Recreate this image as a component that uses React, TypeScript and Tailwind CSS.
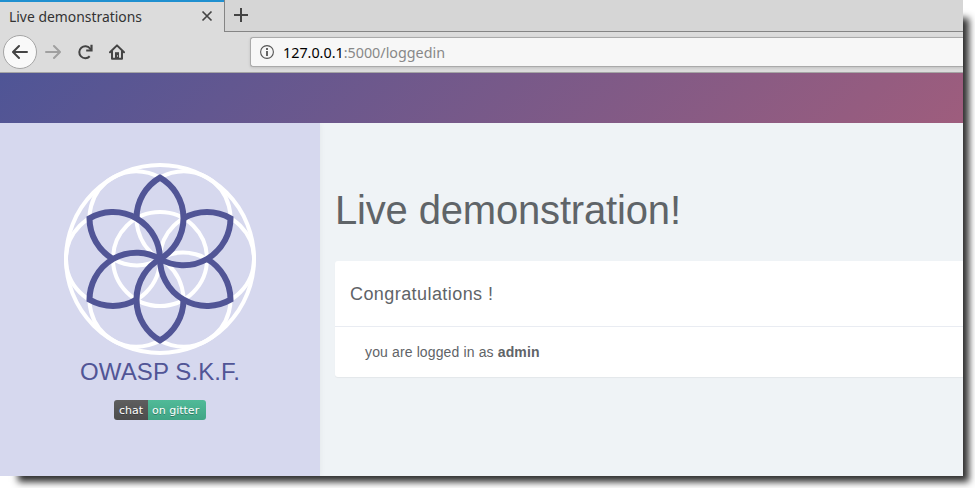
const R = 47;
const H = R * Math.sin(Math.PI / 3);
const angles = [0, 60, 120, 180, 240, 300];

function FlowerLogo() {
  return (
    <svg className="block h-[196px] w-[196px]" viewBox="-98 -98 196 196" fill="none">
      <g stroke="#fff" strokeWidth="4">
        <circle r={R * 2} />
        <circle r={R} />
        {angles.map((a) => (
          <circle key={a} cx={R} r={R} transform={`rotate(${a})`} />
        ))}
      </g>
      <g stroke="#515596" strokeWidth="6" strokeMiterlimit="10">
        {angles.map((a) => (
          <path
            key={a}
            transform={`rotate(${a})`}
            d={`M${-R / 2} ${-H}A${R} ${R} 0 0 1 0 ${-2 * H}A${R} ${R} 0 0 1 0 0`}
          />
        ))}
      </g>
    </svg>
  );
}

function Browser() {
  return (
    <div className="h-[73px] shrink-0 bg-[#dcdcdc] font-['Noto_Sans',sans-serif]">
      <div className="flex h-8">
        <div className="flex h-8 w-[224px] items-center justify-between border-t-2 border-[#2090d0] pr-[11px] pb-[2px] pl-[9px]">
          <span className="origin-left scale-x-[0.927] text-[15px] leading-5 whitespace-nowrap text-[#333]">Live demonstrations</span>
          <svg className="h-3 w-3" viewBox="0 0 12 12" stroke="#444" strokeWidth="1.7">
            <path d="M1.500 1.500l9 9M10.500 1.500l-9 9" />
          </svg>
        </div>
        <div className="flex-1 border-b border-l border-[#858585] bg-[#d6d6d6] pt-2 pl-[9px]">
          <svg className="h-[14px] w-[14px]" viewBox="0 0 14 14" stroke="#444" strokeWidth="2">
            <path d="M7 0v14M0 7h14" />
          </svg>
        </div>
      </div>
      <div className="flex h-[41px] border-b border-[#a5a5a5]">
        <div className="flex w-[250px] items-center pl-[3px]">
          <div className="flex h-[34px] w-[34px] items-center justify-center rounded-full border border-[#a5a5a5] bg-[#f9f9f9]">
            <svg className="h-4 w-4" viewBox="0 0 16 16" fill="none" stroke="#444" strokeWidth="2" strokeLinecap="round" strokeLinejoin="round">
              <path d="M15 8H1.500M7 2L1 8l6 6" />
            </svg>
          </div>
          <svg className="ml-2 h-4 w-4" viewBox="0 0 16 16" fill="none" stroke="#a0a0a0" strokeWidth="2" strokeLinecap="round" strokeLinejoin="round">
            <path d="M1 8h13.500M9 2l6 6-6 6" />
          </svg>
          <svg className="ml-4 h-4 w-4" viewBox="0 0 16 16" fill="none" stroke="#444" strokeWidth="2">
            <path d="M12.700 12.300A6 6 0 1 1 13 4.500L14 6" />
            <path d="M15.600 .8v6.600H9.200V5.500h4.200V.8z" fill="#444" stroke="none" />
          </svg>
          <svg className="ml-4 h-4 w-4" viewBox="0 0 16 16" fill="none" stroke="#444" strokeWidth="2" strokeLinejoin="round" strokeLinecap="round">
            <path d="M1 8.200L8 1.400l7 6.800M3 7v7.800h10V7" />
            <path d="M6 8.200h4v6.300H6z" fill="#444" stroke="none" />
            <path d="M8.500 11v2" stroke="#aaa" strokeWidth="1" strokeLinecap="butt" />
          </svg>
        </div>
        <div className="mt-[5px] flex h-[30px] flex-1 items-center rounded-l-[3px] border border-r-0 border-[#aaa] bg-[#f7f7f7] pl-[9px] shadow-[0_1px_3px_rgba(0,0,0,0.12)]">
          <svg className="h-[14px] w-[14px]" viewBox="0 0 14 14" fill="none" stroke="#555">
            <circle cx="7" cy="7" r="6.400" strokeWidth="1.100" />
            <path d="M7 6v5M7 3v2" strokeWidth="1.800" />
          </svg>
          <span className="ml-[9px] origin-left scale-x-[0.955] text-[15px] leading-5 text-[#888]">
            <span className="text-black">127.0.0.1</span>:5000/loggedin
          </span>
        </div>
      </div>
    </div>
  );
}

export default function App() {
  return (
    <div className="h-[488px] w-[975px] overflow-hidden bg-white font-['Liberation_Sans',Arial,sans-serif]">
      <div className="flex h-[476px] w-[963px] flex-col shadow-[12px_12px_7px_-6px_#303030]">
        <Browser />
        <div className="h-[50px] shrink-0 bg-[linear-gradient(135deg,#4f5596,#9e5d7d)]" />
        <div className="flex min-h-0 flex-1 bg-[#eff3f6]">
          <aside className="flex w-[320px] shrink-0 flex-col items-center bg-[#d6d8ee] pt-[38px] shadow-[0_0_6px_rgba(0,0,0,0.06)] [clip-path:inset(0_-10px_0_0)]">
            <FlowerLogo />
            <h2 className="text-[24px] leading-[30px] tracking-[0.1px] text-[#515596]">OWASP S.K.F.</h2>
            <div className="mt-[13px] flex h-5 w-[92px] overflow-hidden rounded-[3px] font-['DejaVu_Sans',sans-serif] text-[11px] leading-[21px] text-white [text-shadow:0_1px_0_rgba(0,0,0,0.3)]">
              <span className="w-[34px] bg-linear-to-b from-[#5e5e5e] to-[#4d4d4d] pl-[5px]">chat</span>
              <span className="flex-1 bg-linear-to-b from-[#50ba98] to-[#41a585] pl-1 whitespace-nowrap">on gitter</span>
            </div>
          </aside>
          <main className="flex-1 pt-[63px] pl-[15px] text-[#5f6468]">
            <h1 className="text-[40px] leading-[48px] tracking-[-0.17px]">Live demonstration!</h1>
            <section className="mt-[27px] h-[116px] rounded-l-[3px] bg-white shadow-[0_1px_1px_rgba(0,0,0,0.05)]">
              <div className="h-[66px] border-b border-[#e9ecf2] pl-[15px] text-[18px] leading-[67px] tracking-[0.43px]">Congratulations !</div>
              <p className="pl-[30px] text-[14px] leading-[50px] tracking-[0.13px]">
                you are logged in as <b>admin</b>
              </p>
            </section>
          </main>
        </div>
      </div>
    </div>
  );
}
